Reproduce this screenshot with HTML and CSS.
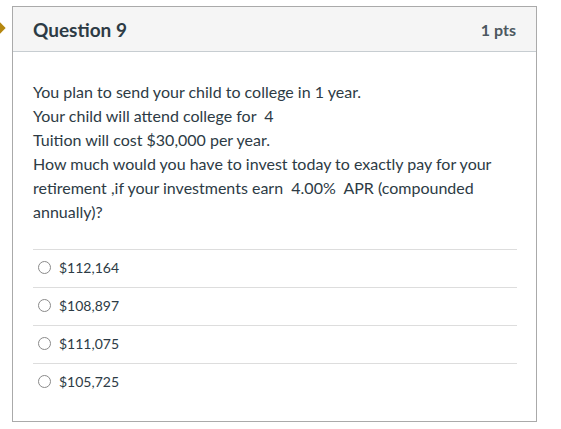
FILE: index.html
```html
<!DOCTYPE html>
<html>
<head>
<meta charset="utf-8">
<link rel="stylesheet" href="styles.css">
</head>
<body>
<div class="page">
  <span class="marker"></span>
  <div class="card">
    <div class="header">
      <h2 class="title">Question 9</h2>
      <span class="pts">1 pts</span>
    </div>
    <div class="body">
      <div class="question">
        <p>You plan to send your child to college in 1 year.</p>
        <p>Your child will attend college for&nbsp; 4</p>
        <p>Tuition will cost $30,000 per year.</p>
        <p>How much would you have to invest today to exactly pay for your retirement ,if your investments earn&nbsp; 4.00%&nbsp; APR (compounded annually)?</p>
      </div>
      <div class="answers">
        <label class="answer"><span class="radio"></span><span>$112,164</span></label>
        <label class="answer"><span class="radio"></span><span>$108,897</span></label>
        <label class="answer"><span class="radio"></span><span>$111,075</span></label>
        <label class="answer"><span class="radio"></span><span>$105,725</span></label>
      </div>
    </div>
  </div>
</div>
</body>
</html>
```
FILE: styles.css
```css
* { box-sizing: border-box; }
html, body { margin: 0; padding: 0; background: #fff; }
body { font-family: Lato, "Noto Sans", sans-serif; color: #2d3b45; }
.page { position: relative; padding: 6px 0 0 12px; width: 561px; }
.marker {
  position: absolute; left: -4px; top: 24px; width: 8px; height: 8px;
  background: #b5870f; transform: rotate(45deg);
}
.card {
  width: 525px; height: 416px;
  border: 1px solid #aaaaaa;
}
.header {
  display: flex; justify-content: space-between; align-items: center;
  height: 45px; background: #f5f5f5; border-bottom: 1px solid #c7cdd1;
  padding: 0 20px;
}
.title { margin: 0; font-size: 19px; font-weight: 700; color: #2d3b45; }
.pts { font-size: 16px; font-weight: 700; color: #4c5860; }
.body { padding: 28px 19px 0 20px; }
.question { font-size: 16px; line-height: 24px; color: #2d3b45; }
.question p { margin: 0; }
.answers { margin-top: 25px; }
.answer {
  display: flex; align-items: center; gap: 8px;
  height: 38px; border-top: 1px solid #dddddd;
  padding-left: 5px; padding-bottom: 3px; font-size: 14px; color: #2d3b45;
}
.radio {
  width: 13px; height: 13px; border: 1px solid #8a8a8a; border-radius: 50%;
  background: #fff; margin-top: 1px;
}
```
